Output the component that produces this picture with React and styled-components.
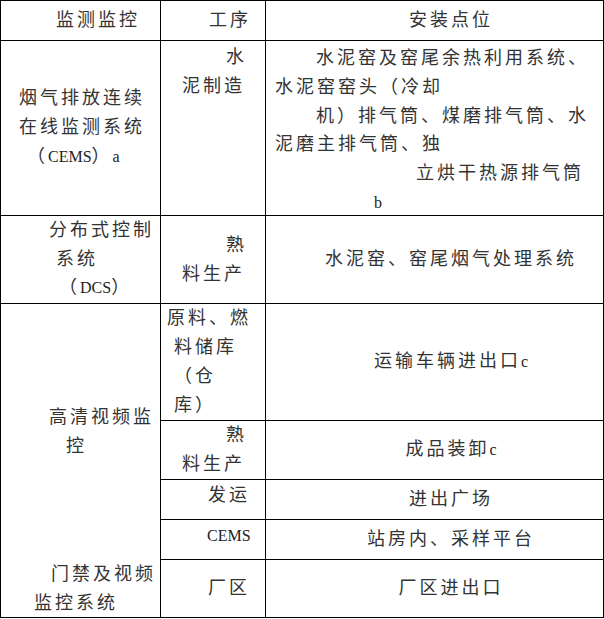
import styled, { createGlobalStyle } from "styled-components";

const GlobalStyle = createGlobalStyle`
  html, body {
    margin: 0;
    padding: 0;
    background: #fff;
  }
`;

const Table = styled.div`
  display: grid;
  grid-template-columns: 160px 105px 338px;
  grid-template-rows: 40px 175px 88px 117px 59px 40px 40px 58px;
  width: 604px;
  box-sizing: border-box;
  border-top: 1px solid #000;
  border-left: 1px solid #000;
  font-family: "Liberation Serif", "Noto Sans CJK SC", serif;
  font-size: 18px;
  line-height: 28.8px;
  letter-spacing: 3px;
  color: #333;
`;

const Cell = styled.div`
  box-sizing: border-box;
  grid-column: ${(p) => p.$col};
  grid-row: ${(p) => p.$row};
  border-right: 1px solid #000;
  border-bottom: ${(p) => (p.$open ? "none" : "1px solid #000")};
  display: flex;
  flex-direction: column;
  justify-content: ${(p) => (p.$top != null ? "flex-start" : "center")};
  padding-top: ${(p) => p.$top || 0}px;
  padding-left: ${(p) => (p.$center ? 33 : 0)}px;
  text-align: ${(p) => (p.$center ? "center" : "left")};
  overflow: hidden;
`;

const Line = styled.div`
  white-space: nowrap;
  padding-left: ${(p) => p.$x || 0}px;
`;

const Lat = styled.span`
  font-size: 16px;
  letter-spacing: 0;
  color: #222;
`;

export default function App() {
  return (
    <>
      <GlobalStyle />
      <Table>
        {/* header */}
        <Cell $col={1} $row={1}>
          <Line $x={55}>监测监控</Line>
        </Cell>
        <Cell $col={2} $row={1}>
          <Line $x={48}>工序</Line>
        </Cell>
        <Cell $col={3} $row={1} $center>
          <Line>安装点位</Line>
        </Cell>

        {/* CEMS */}
        <Cell $col={1} $row={2}>
          <Line $x={18}>烟气排放连续</Line>
          <Line $x={18}>在线监测系统</Line>
          <Line $x={26}>
            （<Lat>CEMS</Lat>）<Lat>a</Lat>
          </Line>
        </Cell>
        <Cell $col={2} $row={2} $top={2}>
          <Line $x={65}>水</Line>
          <Line $x={21}>泥制造</Line>
        </Cell>
        <Cell $col={3} $row={2} $top={3}>
          <Line $x={50}>水泥窑及窑尾余热利用系统、</Line>
          <Line $x={9}>水泥窑窑头（冷却</Line>
          <Line $x={50}>机）排气筒、煤磨排气筒、水</Line>
          <Line $x={9}>泥磨主排气筒、独</Line>
          <Line $x={150}>立烘干热源排气筒</Line>
          <Line $x={108}>
            <Lat>b</Lat>
          </Line>
        </Cell>

        {/* DCS */}
        <Cell $col={1} $row={3}>
          <Line $x={48}>分布式控制</Line>
          <Line $x={55}>系统</Line>
          <Line $x={58}>
            （<Lat>DCS</Lat>）
          </Line>
        </Cell>
        <Cell $col={2} $row={3}>
          <Line $x={65}>熟</Line>
          <Line $x={21}>料生产</Line>
        </Cell>
        <Cell $col={3} $row={3} $center>
          <Line>水泥窑、窑尾烟气处理系统</Line>
        </Cell>

        {/* video */}
        <Cell $col={1} $row="4 / span 4" $open>
          <Line $x={48}>高清视频监</Line>
          <Line $x={65}>控</Line>
        </Cell>
        <Cell $col={2} $row={4}>
          <Line $x={6}>原料、燃</Line>
          <Line $x={13}>料储库</Line>
          <Line $x={13}>（仓</Line>
          <Line $x={13}>库）</Line>
        </Cell>
        <Cell $col={3} $row={4} $center>
          <Line>
            运输车辆进出口<Lat>c</Lat>
          </Line>
        </Cell>

        <Cell $col={2} $row={5}>
          <Line $x={65}>熟</Line>
          <Line $x={21}>料生产</Line>
        </Cell>
        <Cell $col={3} $row={5} $center>
          <Line>
            成品装卸<Lat>c</Lat>
          </Line>
        </Cell>

        <Cell $col={2} $row={6} $top={1}>
          <Line $x={47}>发运</Line>
        </Cell>
        <Cell $col={3} $row={6} $center>
          <Line>进出广场</Line>
        </Cell>

        <Cell $col={2} $row={7} $top={1}>
          <Line $x={46}>
            <Lat>CEMS</Lat>
          </Line>
        </Cell>
        <Cell $col={3} $row={7} $center>
          <Line>站房内、采样平台</Line>
        </Cell>

        {/* access control */}
        <Cell $col={1} $row={8}>
          <Line $x={50}>门禁及视频</Line>
          <Line $x={33}>监控系统</Line>
        </Cell>
        <Cell $col={2} $row={8}>
          <Line $x={47}>厂区</Line>
        </Cell>
        <Cell $col={3} $row={8} $center>
          <Line>厂区进出口</Line>
        </Cell>
      </Table>
    </>
  );
}
